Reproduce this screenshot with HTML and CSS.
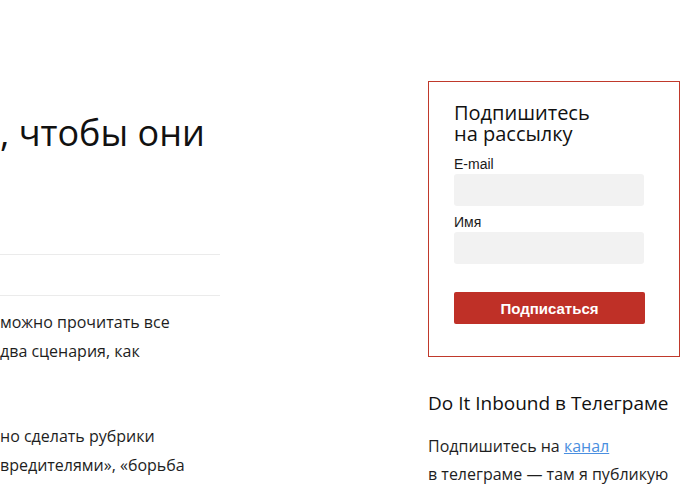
FILE: index.html
```html
<!DOCTYPE html>
<html lang="ru">
<head>
  <meta charset="UTF-8" />
  <meta name="viewport" content="width=device-width, initial-scale=1.0" />
  <title>Do It Inbound</title>
  <link rel="stylesheet" href="styles.css">
</head>
<body>

  <div class="page">
    <div class="post">
      <h1 class="post-title">, чтобы они</h1>

      <hr class="post-line" />
      <div class="post-meta"></div>
      <hr class="post-line" />

      <div class="post-text">
        <p>можно прочитать все<br />два сценария, как<br />&nbsp;</p>
        <p>но сделать рубрики<br />вредителями», «борьба</p>
      </div>
    </div>

    <div class="sidebar">
      <form class="subscribe">
        <div class="subscribe-title">Подпишитесь<br />на рассылку</div>
        <label for="email">E-mail</label>
        <input type="email" id="email" name="email" />
        <label for="name">Имя</label>
        <input type="text" id="name" name="name" />
        <button type="submit">Подписаться</button>
      </form>

      <div class="telegram">
        <h3>Do It Inbound в Телеграме</h3>
        <p>Подпишитесь на <a href="#">канал</a><br />в телеграме — там я публикую</p>
      </div>
    </div>
  </div>

</body>
</html>
```

FILE: styles.css
```css
* {
  box-sizing: border-box;
  margin: 0;
  padding: 0;
}
body {
  font-family: "Open Sans", "DejaVu Sans", sans-serif;
  background-color: #fff;
  color: #1e1e1e;
  overflow: hidden;
}
.page {
  display: flex;
  gap: 208px;
  align-items: flex-start;
}
.post {
  width: 220px;
  flex-shrink: 0;
}
.post-title {
  font-size: 36px;
  font-weight: 400;
  line-height: 44px;
  margin-top: 111px;
  white-space: nowrap;
  color: #111;
}
.post-line {
  border: none;
  border-top: 1px solid #ebebeb;
  margin: 0;
}
.post-title + .post-line {
  margin-top: 99px;
}
.post-meta {
  height: 40px;
}
.post-text {
  padding-top: 12px;
  font-size: 16px;
  line-height: 29px;
  white-space: nowrap;
}
.post-text p {
  margin-bottom: 27px;
}
.sidebar {
  width: 252px;
  flex-shrink: 0;
  margin-top: 81px;
}
.subscribe {
  border: 1px solid #c0392b;
  padding: 20px 34px 32px 25px;
  display: flex;
  flex-direction: column;
}
.subscribe-title {
  font-size: 20px;
  line-height: 21px;
  color: #111;
  margin-bottom: 12px;
}
.subscribe label {
  font-family: "Liberation Sans", Arial, sans-serif;
  font-size: 14px;
  line-height: 16px;
  color: #1a1a1a;
  margin-bottom: 2px;
}
.subscribe input {
  width: 190px;
  height: 32px;
  border: none;
  border-radius: 3px;
  background-color: #f2f2f2;
  margin-bottom: 8px;
}
.subscribe button {
  width: 191px;
  height: 32px;
  margin-top: 20px;
  border: none;
  border-radius: 2px;
  background-color: #bf3027;
  color: white;
  font-family: "Liberation Sans", Arial, sans-serif;
  font-weight: bold;
  font-size: 15px;
  cursor: pointer;
}
.telegram {
  margin-top: 33px;
}
.telegram h3 {
  font-size: 19px;
  font-weight: 400;
  line-height: 26px;
  color: #111;
  white-space: nowrap;
}
.telegram p {
  margin-top: 16px;
  font-size: 16px;
  line-height: 28px;
  white-space: nowrap;
}
.telegram a {
  color: #4a8fe0;
}
```
